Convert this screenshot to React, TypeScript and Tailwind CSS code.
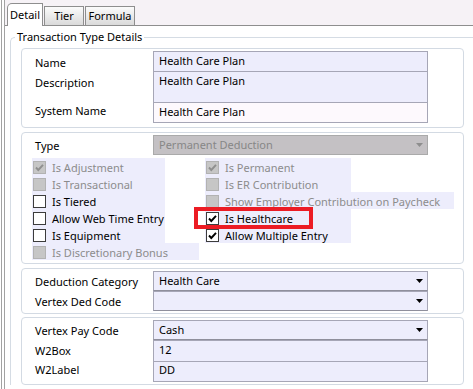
import React from 'react'

type Box = { label: string; checked?: boolean; disabled?: boolean; w: string }

const leftBoxes: Box[] = [
  { label: 'Is Adjustment', checked: true, disabled: true, w: 'w-[133px]' },
  { label: 'Is Transactional', disabled: true, w: 'w-[133px]' },
  { label: 'Is Tiered', w: 'w-[133px]' },
  { label: 'Allow Web Time Entry', w: 'w-[133px]' },
  { label: 'Is Equipment', w: 'w-[133px]' },
  { label: 'Is Discretionary Bonus', disabled: true, w: 'w-[167px]' },
]

const rightBoxes: Box[] = [
  { label: 'Is Permanent', checked: true, disabled: true, w: 'w-[146px]' },
  { label: 'Is ER Contribution', disabled: true, w: 'w-[146px]' },
  { label: 'Show Employer Contribution on Paycheck', disabled: true, w: 'w-[249px]' },
  { label: 'Is Healthcare', checked: true, w: 'w-[146px]' },
  { label: 'Allow Multiple Entry', checked: true, w: 'w-[146px]' },
]

function Check({ checked, disabled }: { checked?: boolean; disabled?: boolean }) {
  return (
    <div
      className={`mt-[3px] ml-[1px] w-[13px] h-[13px] shrink-0 border flex items-center justify-center ${
        disabled ? 'bg-[#c6c6c6] border-[#b2b2b2]' : 'bg-white border-[#3c3c3c]'
      }`}
    >
      {checked && (
        <svg width="11" height="11" viewBox="0 0 11 11">
          <path
            d="M2 5.5 L4.3 8 L9 2.8"
            fill="none"
            stroke={disabled ? '#8f8f8f' : '#000'}
            strokeWidth="1.9"
          />
        </svg>
      )}
    </div>
  )
}

function CheckRow({ b }: { b: Box }) {
  return (
    <div className={`h-[17px] flex items-start bg-[#ededfc] ${b.w}`}>
      <Check checked={b.checked} disabled={b.disabled} />
      <span className={`ml-[6px] mt-[2px] whitespace-nowrap ${b.disabled ? 'text-[#8c8c8c]' : 'text-black'}`}>
        {b.label}
      </span>
    </div>
  )
}

function Arrow({ disabled }: { disabled?: boolean }) {
  return (
    <svg width="7" height="4" viewBox="0 0 7 4" className="ml-auto mr-[4px] mt-[6px]">
      <polygon points="0,0 7,0 3.5,4" fill={disabled ? '#8e8e8e' : '#000'} />
    </svg>
  )
}

function Select({ value, disabled }: { value: string; disabled?: boolean }) {
  return (
    <div
      className={`w-[275px] h-[20px] border flex items-start pl-[5px] pt-[1px] ${
        disabled
          ? 'bg-[#c4c1c4] border-[#aaaaaa] text-[#878787]'
          : 'bg-[#ededfc] border-[#a6a6b6] border-b-[#8f8f9c]'
      }`}
    >
      <span>{value}</span>
      <Arrow disabled={disabled} />
    </div>
  )
}

function Row({ label, lpt, children }: { label: string; lpt: string; children: React.ReactNode }) {
  return (
    <div className="flex">
      <div className={`w-[131px] pl-[13px] ${lpt}`}>{label}</div>
      {children}
    </div>
  )
}

function Field({ value, h, bg = 'bg-[#ededfc]', last, pt = 'pt-[1px]' }: { value: string; h: string; bg?: string; last?: boolean; pt?: string }) {
  return (
    <div className={`w-[275px] ${h} ${bg} ${pt} pl-[5px] border-t border-x border-[#a6a6b6] ${last ? 'border-b' : ''}`}>
      {value}
    </div>
  )
}

function Tab({ label, active, w }: { label: string; active?: boolean; w: string }) {
  return (
    <div
      className={`${w} border-t border-x border-[#8e8e8e] flex justify-center ${
        active
          ? 'h-[23px] -mb-[1px] bg-white rounded-tl-[5px] pt-[3px]'
          : 'h-[19px] bg-gradient-to-b from-[#fbfbfb] to-[#dadada] pt-[1px]'
      }`}
    >
      {label}
    </div>
  )
}

export default function App() {
  return (
    <div className="relative w-[473px] h-[389px] overflow-hidden bg-white flex font-['Segoe_UI','Noto_Sans',sans-serif] text-[11px] leading-[16px] text-black">
      <div className="ml-[1px] w-[1px] bg-[#a2a2a2]" />
      <div className="ml-[2px] w-[1px] bg-[#a2a2a2]" />

      <div className="flex-1 flex flex-col">
        <div className="h-[26px] bg-[#f6f2f6] border-b border-[#8e8e8e] flex items-end gap-[1px] pl-[2px]">
          <Tab label="Detail" active w="w-[36px]" />
          <Tab label="Tier" w="w-[40px]" />
          <Tab label="Formula" w="w-[50px]" />
        </div>

        <fieldset className="mt-[3px] ml-[5px] border-l border-t border-[#d5dce4] rounded-tl-[5px] min-w-0">
          <legend className="ml-[4px] px-[2px] leading-[16px]">Transaction Type Details</legend>
          <div className="pl-[10px] pt-[3px] flex flex-col">
            {/* names */}
            <div className="w-[443px] border border-[#d3dae3] rounded-[4px] pt-[2px] pb-[4px]">
              <Row label="Name" lpt="pt-[4px]">
                <Field value="Health Care Plan" h="h-[20px]" />
              </Row>
              <Row label="Description" lpt="pt-[4px]">
                <Field value="Health Care Plan" h="h-[31px]" />
              </Row>
              <Row label="System Name" lpt="pt-[1px]">
                <Field value="Health Care Plan" h="h-[21px]" bg="bg-[#fdf9fd]" last />
              </Row>
            </div>

            {/* type + flags */}
            <div className="mt-[4px] w-[443px] border border-[#d3dae3] rounded-[4px] pt-[2px] pb-[3px]">
              <Row label="Type" lpt="pt-[3px]">
                <Select value="Permanent Deduction" disabled />
              </Row>
              <div className="mt-[3px] pl-[10px] flex">
                <div className="w-[173px] flex flex-col">
                  {leftBoxes.map(b => (
                    <CheckRow key={b.label} b={b} />
                  ))}
                </div>
                <div className="flex flex-col">
                  {rightBoxes.map(b => (
                    <CheckRow key={b.label} b={b} />
                  ))}
                </div>
              </div>
            </div>

            {/* deduction */}
            <div className="mt-[4px] w-[443px] border border-[#d3dae3] rounded-[4px] py-[2px]">
              <Row label="Deduction Category" lpt="pt-[3px]">
                <Select value="Health Care" />
              </Row>
              <Row label="Vertex Ded Code" lpt="pt-[3px]">
                <Select value="" />
              </Row>
            </div>

            {/* pay code */}
            <div className="mt-[3px] w-[443px] border border-[#d3dae3] rounded-[4px] py-[2px]">
              <Row label="Vertex Pay Code" lpt="pt-[3px]">
                <Select value="Cash" />
              </Row>
              <Row label="W2Box" lpt="pt-[3px]">
                <Field value="12" h="h-[21px]" />
              </Row>
              <Row label="W2Label" lpt="pt-[1px]">
                <Field value="DD" h="h-[21px]" last pt="pt-0" />
              </Row>
            </div>
          </div>
        </fieldset>
      </div>

      {/* highlight around Is Healthcare */}
      <div className="absolute left-[194px] top-[207px] w-[119px] h-[22px] border-4 border-[#ec1c24]" />
    </div>
  )
}
